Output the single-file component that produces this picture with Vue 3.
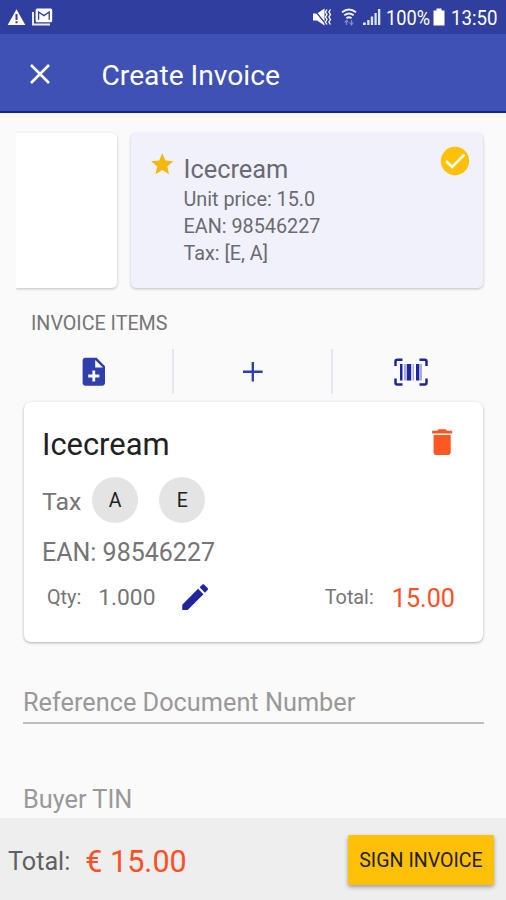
<script setup>
import { ref, computed } from 'vue'

const product = ref({
  name: 'Icecream',
  unitPrice: '15.0',
  ean: '98546227',
  taxes: ['E', 'A']
})

const item = ref({
  name: 'Icecream',
  ean: '98546227',
  taxes: ['A', 'E'],
  qty: 1,
  price: 15
})

const itemTotal = computed(() => (item.value.qty * item.value.price).toFixed(2))
</script>

<template>
  <div class="screen">
    <div class="status-bar">
      <svg class="status-left" width="60" height="34" viewBox="0 0 60 34">
        <path d="M16.500 9.200 25.300 25H7.700z" fill="#fff" />
        <path d="M15.500 14h2v6h-2zM15.500 21.200h2v2h-2z" fill="#303f9f" />
        <path d="M33 12v12.500h17" fill="none" stroke="#e8eaf6" stroke-width="2" />
        <rect x="35.600" y="8.600" width="16.600" height="13.600" rx="1.500" fill="#fff" />
        <path d="M38.600 19.800V12l5.300 3.600 5.300-3.600v7.800" fill="none" stroke="#303f9f" stroke-width="1.300" />
      </svg>
      <svg class="status-right" width="200" height="34" viewBox="306 0 200 34">
        <path d="M313 13.500h4l7.500-5v17l-7.500-5h-4z" fill="#fff" />
        <path d="M313.500 9 327 25.500" stroke="#303f9f" stroke-width="1.200" />
        <path d="M327 9.500l-1.600 2.500 1.600 2.500-1.600 2.500 1.600 2.500-1.600 2.500 1.600 2.500M330.500 9.500l-1.600 2.500 1.600 2.500-1.600 2.500 1.600 2.500-1.600 2.500 1.600 2.500" fill="none" stroke="#fff" stroke-width="1.300" />
        <path d="M342 12.300q7-5.600 14 0M344.300 15.300q4.700-3.600 9.400 0M346.500 18.200q2.500-2 5 0" fill="none" stroke="#eef0ff" stroke-width="2" />
        <path d="M346.500 20v5M344.700 22.500l1.800-2.300 1.800 2.300M351.500 20v5M349.700 22.500l1.800 2.400 1.800-2.400" fill="none" stroke="#7f8acb" stroke-width="1.200" />
        <path d="M363 25v-2.500h2.800V25zM367.200 25v-5h2.300v5zM370.800 25v-8.500h2.300V25zM374.500 25V13h2.200v12zM378 25V9h2.300v16z" fill="#dfe3fa" />
        <text x="386" y="25" textLength="44" lengthAdjust="spacingAndGlyphs">100%</text>
        <path d="M436.500 8.500h5v2h3v15h-11v-15h3z" fill="#fff" />
        <text x="451" y="25" textLength="46.500" lengthAdjust="spacingAndGlyphs">13:50</text>
      </svg>
    </div>

    <header class="app-bar">
      <svg class="close" width="20" height="20" viewBox="0 0 20 20">
        <path d="M1 1 19 19M19 1 1 19" stroke="#fff" stroke-width="2.600" />
      </svg>
      <h1>Create Invoice</h1>
    </header>

    <main class="content">
      <section class="products">
        <div class="product-card empty"></div>
        <div class="product-card selected">
          <svg class="star" width="26.500" height="26.500" viewBox="0 0 24 24">
            <path fill="#f4b70b" d="M12 17.270 18.180 21l-1.640-7.030L22 9.240l-7.190-.61L12 2 9.190 8.630 2 9.240l5.460 4.730L5.820 21z" />
          </svg>
          <div class="product-info">
            <div class="product-name">{{ product.name }}</div>
            <div class="product-line">Unit price: {{ product.unitPrice }}</div>
            <div class="product-line">EAN: {{ product.ean }}</div>
            <div class="product-line">Tax: [{{ product.taxes.join(', ') }}]</div>
          </div>
          <svg class="check" width="34" height="34" viewBox="0 0 24 24">
            <circle cx="12" cy="12" r="10" fill="#ffc107" />
            <path d="M5.800 12.200 10 16.200 18.600 7.500" fill="none" stroke="#fff" stroke-width="1.900" />
          </svg>
        </div>
      </section>

      <h2>INVOICE ITEMS</h2>

      <div class="tools">
        <button class="tool">
          <svg width="33.600" height="33.600" viewBox="0 0 24 24">
            <path fill="#303fab" d="M14 2H6c-1.100 0-1.990.9-1.990 2L4 20c0 1.100.89 2 1.990 2H18c1.100 0 2-.9 2-2V8l-6-6zm2 14h-3v3h-2v-3H8v-2h3v-3h2v3h3v2zm-3-7V3.500L18.500 9H13z" />
          </svg>
        </button>
        <button class="tool">
          <svg width="33.600" height="33.600" viewBox="0 0 24 24">
            <path fill="#303fab" d="M19 12.850h-6.150V19h-1.700v-6.150H5v-1.700h6.150V5h1.700v6.150H19z" />
          </svg>
        </button>
        <button class="tool">
          <svg width="34" height="28" viewBox="0 0 34 28">
            <path d="M1.500 8V3.500q0-1.700 1.700-1.700h5.300M25.500 1.800h5.300q1.700 0 1.700 1.700V8M32.500 20.500v4.300q0 1.700-1.700 1.700h-5.300M8.500 26.500H3.200q-1.700 0-1.700-1.700v-4.300" fill="none" stroke="#1f259c" stroke-width="2.500" />
            <path d="M6 6h2.500v16.500H6zM12.700 6h4.500v16.500h-4.500zM22 6h3v16.500h-3z" fill="#1f259c" />
            <path d="M10 6h2v16.500h-2zM18.500 6h1.500v16.500h-1.500zM25 6h3v16.500h-3z" fill="#a9abd8" />
          </svg>
        </button>
      </div>

      <section class="item-card">
        <div class="item-head">
          <div class="item-name">{{ item.name }}</div>
          <svg class="trash" width="34.300" height="34.300" viewBox="0 0 24 24">
            <path fill="#ff5722" d="M6 19c0 1.100.9 2 2 2h8c1.100 0 2-.9 2-2V7H6v12zM19 4h-3.500l-1-1h-5l-1 1H5v2h14V4z" />
          </svg>
        </div>
        <div class="item-tax">
          <span class="tax-label">Tax</span>
          <span v-for="tax in item.taxes" :key="tax" class="chip">{{ tax }}</span>
        </div>
        <div class="item-ean">EAN: {{ item.ean }}</div>
        <div class="item-foot">
          <span class="small">Qty:</span>
          <span class="qty">{{ item.qty.toFixed(3) }}</span>
          <svg class="edit" width="34.300" height="34.300" viewBox="0 0 24 24">
            <path fill="#1f259c" d="M3 17.250V21h3.750L17.810 9.940l-3.750-3.750L3 17.250zM20.710 7.040c.39-.39.39-1.020 0-1.410l-2.340-2.340c-.39-.39-1.020-.39-1.410 0l-1.830 1.830 3.750 3.750 1.830-1.830z" />
          </svg>
          <span class="small total-label">Total:</span>
          <span class="item-total">{{ itemTotal }}</span>
        </div>
      </section>

      <div class="field underlined">Reference Document Number</div>
      <div class="field">Buyer TIN</div>
    </main>

    <footer class="footer">
      <span class="footer-label">Total:</span>
      <span class="footer-total">€ {{ itemTotal }}</span>
      <button class="sign">SIGN INVOICE</button>
    </footer>
  </div>
</template>

<style>
body {
  margin: 0;
  background: #fafafa;
}
</style>

<style scoped>
.screen {
  width: 506px;
  height: 900px;
  display: flex;
  flex-direction: column;
  overflow: hidden;
  background: #fafafa;
  font-family: Roboto, "Liberation Sans", sans-serif;
  color: #757575;
  white-space: nowrap;
}

.screen * {
  box-sizing: border-box;
}

svg {
  display: block;
  flex-shrink: 0;
}

.status-bar {
  height: 34px;
  flex-shrink: 0;
  display: flex;
  justify-content: space-between;
  background: #303f9f;
}

.status-right text {
  font-size: 21px;
  fill: #fff;
}

.app-bar {
  height: 79px;
  flex-shrink: 0;
  display: flex;
  align-items: center;
  padding: 3px 0 0 30px;
  background: #3f51b5;
  border-bottom: 2px solid #1a1f9c;
}

h1 {
  margin: 2px 0 0 51.5px;
  font-size: 28.2px;
  font-weight: 400;
  color: #fff;
}

.content {
  height: 705px;
  flex-shrink: 0;
  display: flex;
  flex-direction: column;
}

.products {
  display: flex;
  gap: 14px;
  padding: 20px 0 0 16px;
}

.product-card {
  height: 155px;
  border-radius: 5px;
  box-shadow: 0 1px 3px rgba(0, 0, 0, 0.24);
}

.empty {
  width: 101px;
  border-radius: 0 5px 5px 0;
  background: #fff;
  clip-path: inset(-5px -5px -5px 0);
}

.selected {
  width: 352px;
  display: flex;
  align-items: flex-start;
  padding: 11px 11px 0 18px;
  background: #f0f1fa;
}

.star {
  margin-top: 7px;
}

.product-info {
  flex: 1;
  padding: 8px 0 0 8px;
  color: #6a6a72;
}

.product-name {
  font-size: 25.4px;
  line-height: 34px;
}

.product-line {
  font-size: 19.8px;
  line-height: 27px;
}

h2 {
  margin: 24px 0 0 31px;
  font-size: 19.7px;
  line-height: 24px;
  font-weight: 400;
}

.tools {
  display: flex;
  height: 45px;
  margin: 13px 17px 0 16px;
}

.tool {
  flex: 1;
  display: flex;
  align-items: center;
  justify-content: center;
  padding: 0;
  border: 0;
  background: none;
}

.tool + .tool {
  border-left: 2px solid #e4e6f5;
}

.item-card {
  height: 240px;
  margin: 8px 23px 0 24px;
  padding: 22px 28px 0 18px;
  border-radius: 7px;
  background: #fff;
  box-shadow: 0 1px 3px rgba(0, 0, 0, 0.3);
}

.item-head {
  display: flex;
  justify-content: space-between;
}

.item-name {
  padding-top: 1px;
  font-size: 30.9px;
  line-height: 39px;
  color: #212121;
}

.trash {
  margin: 1px -4px 0 0;
}

.item-tax {
  display: flex;
  align-items: center;
  margin-top: 13px;
}

.tax-label {
  margin: 2px 11px 0 0;
  font-size: 24.8px;
}

.chip {
  width: 46px;
  height: 46px;
  display: flex;
  align-items: center;
  justify-content: center;
  border-radius: 50%;
  background: #e4e4e4;
  font-size: 19.5px;
  color: #212121;
}

.chip + .chip {
  margin-left: 21px;
}

.item-ean {
  margin-top: 15px;
  font-size: 25px;
  line-height: 30px;
}

.item-foot {
  display: flex;
  align-items: center;
  margin: 12px 0 0 5px;
}

.small {
  font-size: 19.8px;
}

.qty {
  margin: 0 0 0 17px;
  font-size: 22.8px;
}

.edit {
  margin-left: 22px;
}

.total-label {
  margin-left: auto;
}

.item-total {
  margin: 2px 0 0 18px;
  font-size: 25.2px;
  color: #ff4f25;
}

.field {
  margin: 0 22px 0 23px;
  padding-top: 61px;
  font-size: 25.3px;
  line-height: 30px;
  color: #999;
}

.underlined {
  height: 82px;
  padding-top: 46px;
  border-bottom: 2px solid #bdbdbd;
}

.footer {
  height: 82px;
  flex-shrink: 0;
  display: flex;
  align-items: center;
  padding: 2px 12px 0 8px;
  background: #eee;
}

.footer-label {
  margin-top: 2px;
  font-size: 25.2px;
  color: #616161;
}

.footer-total {
  margin: 2px 0 0 15px;
  font-size: 30.5px;
  color: #ff4f25;
}

.sign {
  width: 146px;
  height: 50px;
  margin-left: auto;
  padding: 1px 0 0;
  border: 0;
  border-radius: 2px;
  background: #ffc107;
  box-shadow: 0 2px 4px rgba(0, 0, 0, 0.35);
  font-family: inherit;
  font-size: 19.6px;
  font-weight: 400;
  color: #212121;
}
</style>
